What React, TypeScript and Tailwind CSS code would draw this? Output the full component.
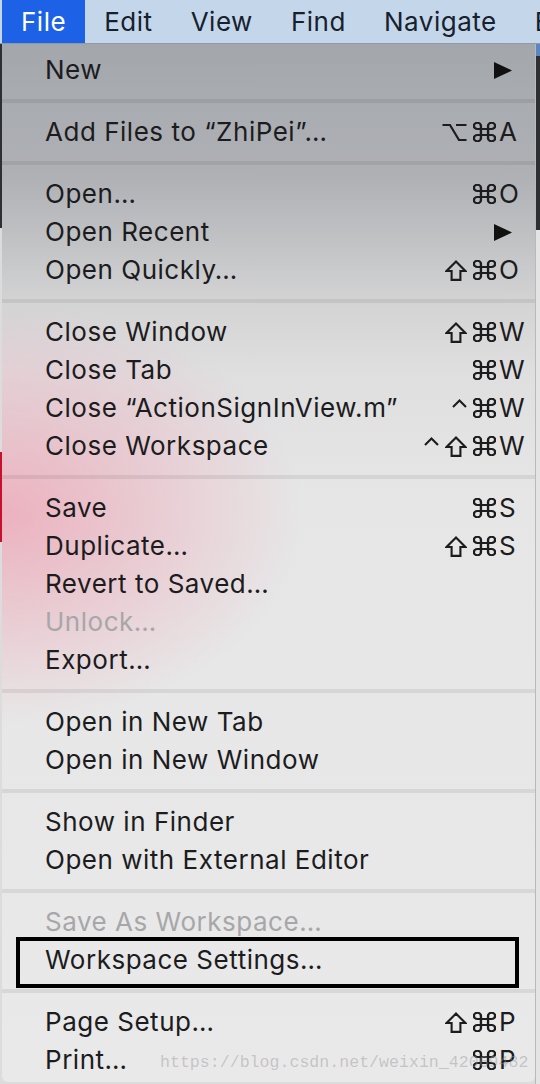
import React from 'react';

type Item =
  | { type: 'sep' }
  | {
      type: 'item';
      label: string;
      mods?: string[];
      k?: string;
      sub?: boolean;
      disabled?: boolean;
      boxed?: boolean;
    };

const SEP: Item = { type: 'sep' };
const it = (label: string, opts: Partial<Omit<Extract<Item, { type: 'item' }>, 'type' | 'label'>> = {}): Item => ({
  type: 'item',
  label,
  ...opts,
});

const items: Item[] = [
  it('New', { sub: true }),
  SEP,
  it('Add Files to \u201cZhiPei\u201d\u2026', { mods: ['opt', 'cmd'], k: 'A' }),
  SEP,
  it('Open\u2026', { mods: ['cmd'], k: 'O' }),
  it('Open Recent', { sub: true }),
  it('Open Quickly\u2026', { mods: ['shift', 'cmd'], k: 'O' }),
  SEP,
  it('Close Window', { mods: ['shift', 'cmd'], k: 'W' }),
  it('Close Tab', { mods: ['cmd'], k: 'W' }),
  it('Close \u201cActionSignInView.m\u201d', { mods: ['ctrl', 'cmd'], k: 'W' }),
  it('Close Workspace', { mods: ['ctrl', 'shift', 'cmd'], k: 'W' }),
  SEP,
  it('Save', { mods: ['cmd'], k: 'S' }),
  it('Duplicate\u2026', { mods: ['shift', 'cmd'], k: 'S' }),
  it('Revert to Saved\u2026'),
  it('Unlock\u2026', { disabled: true }),
  it('Export\u2026'),
  SEP,
  it('Open in New Tab'),
  it('Open in New Window'),
  SEP,
  it('Show in Finder'),
  it('Open with External Editor'),
  SEP,
  it('Save As Workspace\u2026', { disabled: true }),
  it('Workspace Settings\u2026', { boxed: true }),
  SEP,
  it('Page Setup\u2026', { mods: ['shift', 'cmd'], k: 'P' }),
  it('Print\u2026', { mods: ['cmd'], k: 'P' }),
];

function Mod({ m }: { m: string }) {
  if (m === 'cmd')
    return (
      <svg width="23" height="20" viewBox="2.3 2.3 19.4 19.4" preserveAspectRatio="none" fill="none" stroke="currentColor" strokeWidth="2">
        <path d="M15 6v12a3 3 0 1 0 3-3H6a3 3 0 1 0 3 3V6a3 3 0 1 0-3 3h12a3 3 0 1 0-3-3" />
      </svg>
    );
  if (m === 'shift')
    return (
      <svg width="22" height="21" viewBox="0 0 22 21" fill="none" stroke="currentColor" strokeWidth="2.1" strokeLinejoin="miter">
        <polygon points="11,1.6 1.6,11 6.6,11 6.6,19.9 15.4,19.9 15.4,11 20.4,11" />
      </svg>
    );
  if (m === 'opt')
    return (
      <svg width="25" height="19" viewBox="0 0 25 19" fill="none" stroke="currentColor" strokeWidth="2.2">
        <path d="M0.5 2h7.5l9 15h7.5M14 2h10.5" />
      </svg>
    );
  return (
    <svg width="15" height="20" viewBox="0 0 15 20" fill="none" stroke="currentColor" strokeWidth="2.1">
      <polyline points="1,9 7.5,2.4 14,9" />
    </svg>
  );
}

function Row({ item }: { item: Extract<Item, { type: 'item' }> }) {
  return (
    <div className="relative flex h-[38px] items-center pl-[43px] pr-[10px]">
      <span
        className={`flex-1 whitespace-nowrap text-[26px] leading-[38px] tracking-[0.02em] ${
          item.disabled ? 'text-[#a7a7a8]' : 'text-[#1c1c1e]'
        }`}
      >
        {item.label}
      </span>
      {item.sub && (
        <svg width="18" height="17" viewBox="0 0 18 17" className="mr-[13px]">
          <polygon points="0,0 18,8.5 0,17" fill="#111" />
        </svg>
      )}
      {item.k && (
        <div className="flex items-center text-[#1c1c1e]">
          <div className="flex items-center justify-end gap-[6px]">
            {item.mods?.map((m, i) => (
              <Mod key={i} m={m} />
            ))}
          </div>
          <span className="ml-[3px] w-[26px] text-[26px] leading-[38px] tracking-[0.02em]">{item.k}</span>
        </div>
      )}
      {item.boxed && (
        <div className="pointer-events-none absolute -top-[4px] -bottom-[9px] left-[14px] right-[16px] border-[4px] border-black" />
      )}
    </div>
  );
}

export default function App() {
  return (
    <div
      className="relative h-[1084px] w-[540px] overflow-hidden bg-[#dcdcdc]"
      style={{ fontFamily: 'Inter, "Noto Sans", sans-serif' }}
    >
      {/* Menu bar */}
      <div className="flex h-[44px] items-center overflow-hidden whitespace-nowrap border-b border-[#8f9aa6] bg-[#c4d7ea] pl-[2px] text-[26px] tracking-[0.02em] text-[#17212e]">
        <div className="flex h-full shrink-0 items-center bg-[#1d62e6] px-[19px] text-white">File</div>
        <div className="shrink-0 px-[19px]">Edit</div>
        <div className="shrink-0 px-[19px]">View</div>
        <div className="shrink-0 px-[19px]">Find</div>
        <div className="shrink-0 px-[19px]">Navigate</div>
        <div className="shrink-0 px-[19px]">E</div>
      </div>

      <div className="flex h-[1040px]">
        {/* left background strip */}
        <div className="flex w-[2px] flex-col">
          <div className="h-[184px] bg-[#2e2f33]" />
          <div className="h-[224px] bg-[#dcdcdc]" />
          <div className="h-[90px] bg-[#c8102e]" />
          <div className="flex-1 bg-[#dcdcdc]" />
        </div>

        {/* Menu panel */}
        <div className="flex h-[1038px] w-[533px] flex-col rounded-b-[6px] bg-[image:radial-gradient(ellipse_300px_210px_at_0px_470px,rgba(238,160,178,0.75),rgba(238,160,178,0)),linear-gradient(to_bottom,#a3a6ab_0px,#a9acb1_60px,#aeb0b4_130px,#c2c3c5_200px,#d4d4d5_260px,#dfdfe0_330px,#e6e6e6_450px,#e9e9e9_100%)] pb-[3px] pt-[7px]">
          {items.map((item, i) =>
            item.type === 'sep' ? (
              <div key={i} className="flex h-[24px] items-center">
                <div className="h-[4px] w-full bg-black/[0.07]" />
              </div>
            ) : (
              <Row key={i} item={item} />
            )
          )}
        </div>

        {/* right background strip */}
        <div className="flex w-[5px] flex-col border-l border-[#b9b9b9]">
          <div className="h-[12px] bg-[#5b86c2]" />
          <div className="h-[174px] bg-[#2e2f33]" />
          <div className="flex-1 bg-[#e4e4e4]" />
        </div>
      </div>

      {/* watermark */}
      <div
        className="pointer-events-none absolute left-[160px] top-[1051px] whitespace-nowrap text-[16.6px] leading-[24px] text-[rgba(150,150,150,0.45)]"
        style={{ fontFamily: '"Liberation Mono", monospace' }}
      >
        https://blog.csdn.net/weixin_42069482
      </div>
    </div>
  );
}
